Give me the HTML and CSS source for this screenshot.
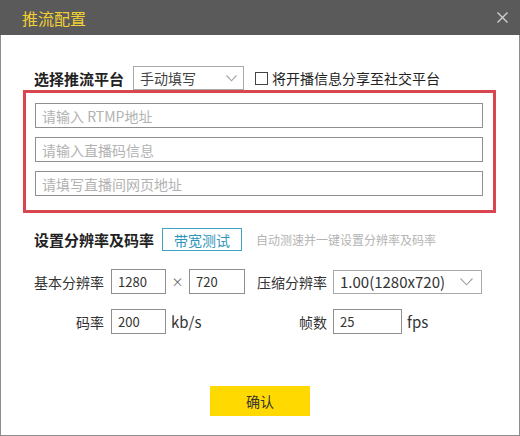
FILE: index.html
```html
<!DOCTYPE html>
<html lang="zh-CN">
<head>
<meta charset="utf-8">
<title>推流配置</title>
<link rel="stylesheet" href="styles.css">
</head>
<body>
<div class="win">
  <div class="titlebar">
    <span class="title">推流配置</span>
    <svg class="close" width="11" height="11" viewBox="0 0 11 11"><path d="M0.5 0.5 L10.5 10.5 M10.5 0.5 L0.5 10.5" stroke="#cfcfcf" stroke-width="1.4" fill="none"/></svg>
  </div>
  <div class="content">
    <div class="row row-platform">
      <span class="lbl-bold lbl-platform">选择推流平台</span>
      <div class="select select-platform">
        <span>手动填写</span>
        <svg class="chev" width="11" height="7" viewBox="0 0 11 7"><path d="M0.5 0.5 L5.5 5.8 L10.5 0.5" stroke="#a3a3a3" stroke-width="1.1" fill="none"/></svg>
      </div>
      <span class="checkbox"></span>
      <span class="check-label">将开播信息分享至社交平台</span>
    </div>
    <div class="redbox">
      <input class="field" placeholder="请输入 RTMP地址">
      <input class="field" placeholder="请输入直播码信息">
      <input class="field" placeholder="请填写直播间网页地址">
    </div>
    <div class="row row-head">
      <span class="lbl-bold lbl-head">设置分辨率及码率</span>
      <span class="btn-test">带宽测试</span>
      <span class="hint">自动测速并一键设置分辨率及码率</span>
    </div>
    <div class="row row-res">
      <div class="left">
        <span class="lbl">基本分辨率</span>
        <span class="box box-w">1280</span>
        <span class="times">×</span>
        <span class="box box-h">720</span>
      </div>
      <div class="right">
        <span class="lbl-r">压缩分辨率</span>
        <div class="select select-scale">
          <span>1.00(1280x720)</span>
          <svg class="chev" width="13" height="8" viewBox="0 0 13 8"><path d="M0.5 0.5 L6.5 6.8 L12.5 0.5" stroke="#a3a3a3" stroke-width="1.1" fill="none"/></svg>
        </div>
      </div>
    </div>
    <div class="row row-rate">
      <div class="left">
        <span class="lbl">码率</span>
        <span class="box box-w">200</span>
        <span class="unit">kb/s</span>
      </div>
      <div class="right">
        <span class="lbl-r">帧数</span>
        <span class="box box-fps">25</span>
        <span class="unit">fps</span>
      </div>
    </div>
    <div class="actions">
      <span class="btn-ok">确认</span>
    </div>
  </div>
</div>
</body>
</html>
```

FILE: styles.css
```css
html, body {
  margin: 0;
  padding: 0;
  background: #ffffff;
}
body {
  font-family: "Noto Sans CJK SC", "Noto Sans", sans-serif;
  color: #333333;
}
.win {
  width: 520px;
  height: 436px;
  display: flex;
  flex-direction: column;
}
.titlebar {
  height: 35px;
  flex: none;
  background: #5a5a5a;
  display: flex;
  align-items: center;
  justify-content: space-between;
  padding: 0 12px 0 22px;
  box-sizing: border-box;
}
.title {
  font-size: 16px;
  line-height: 1;
  color: #f2d034;
}
.close {
  display: block;
}
.content {
  flex: 1;
  border: 1px solid #8c8c8c;
  border-top: none;
  padding: 31px 0 0 22px;
  box-sizing: border-box;
}
.row {
  display: flex;
  align-items: center;
  padding-left: 11px;
}
.lbl-bold {
  font-size: 15px;
  font-weight: bold;
  color: #222222;
  line-height: 1;
}
.row-platform {
  height: 24px;
}
.lbl-platform {
  width: 99px;
}
.select {
  box-sizing: border-box;
  border: 1px solid #a9a9a9;
  display: flex;
  align-items: center;
  justify-content: space-between;
  padding: 0 6px 0 6px;
  color: #444444;
  line-height: 1;
}
.select-platform {
  width: 111px;
  height: 24px;
  font-size: 14px;
}
.checkbox {
  width: 13px;
  height: 13px;
  box-sizing: border-box;
  border: 1px solid #444444;
  margin-left: 11px;
}
.check-label {
  margin-left: 4px;
  font-size: 14px;
  color: #222222;
  line-height: 1;
}
.redbox {
  width: 473px;
  box-sizing: border-box;
  border: 3px solid #d9464f;
  padding: 10px 10px 14px 9px;
  display: flex;
  flex-direction: column;
  gap: 9px;
}
.field {
  height: 25px;
  box-sizing: border-box;
  border: 1px solid #8f8f8f;
  padding: 0 6px;
  margin: 0;
  font-family: "Noto Sans CJK SC", "Noto Sans", sans-serif;
  font-size: 14px;
  color: #333333;
  outline: none;
}
.field::placeholder {
  color: #b2b2b2;
}
.row-head {
  margin-top: 15px;
  height: 23px;
}
.lbl-head {
  width: 128px;
}
.btn-test {
  width: 80px;
  height: 23px;
  box-sizing: border-box;
  border: 1px solid #3fa4c4;
  color: #2e96bc;
  font-size: 14px;
  display: flex;
  align-items: center;
  justify-content: center;
  line-height: 1;
}
.hint {
  margin-left: 14px;
  font-size: 12px;
  color: #b4b4b4;
  line-height: 1;
}
.row-res {
  margin-top: 18px;
  height: 25px;
}
.row-rate {
  margin-top: 15px;
  height: 25px;
}
.left {
  width: 211px;
  display: flex;
  align-items: center;
}
.right {
  display: flex;
  align-items: center;
}
.lbl {
  width: 70px;
  margin-right: 7px;
  text-align: right;
  font-size: 14px;
  color: #333333;
  line-height: 1;
}
.lbl-r {
  width: 82px;
  margin-right: 6px;
  text-align: right;
  font-size: 14px;
  color: #333333;
  line-height: 1;
}
.box {
  height: 25px;
  box-sizing: border-box;
  border: 1px solid #8f8f8f;
  padding-left: 6px;
  display: flex;
  align-items: center;
  font-size: 13px;
  color: #333333;
  line-height: 1;
}
.box-w {
  width: 55px;
}
.box-h {
  width: 56px;
}
.box-fps {
  width: 69px;
}
.times {
  width: 23px;
  text-align: center;
  font-size: 12px;
  color: #666666;
  line-height: 1;
}
.unit {
  margin-left: 5px;
  font-size: 15px;
  color: #333333;
  line-height: 1;
}
.select-scale {
  width: 149px;
  height: 24px;
  font-size: 15px;
  padding: 0 8px 0 6px;
  color: #333333;
}
.actions {
  margin-top: 52px;
  margin-left: -22px;
  display: flex;
  justify-content: center;
}
.btn-ok {
  width: 100px;
  height: 30px;
  background: #ffd900;
  color: #333333;
  font-size: 14px;
  display: flex;
  align-items: center;
  justify-content: center;
  line-height: 1;
}
```
